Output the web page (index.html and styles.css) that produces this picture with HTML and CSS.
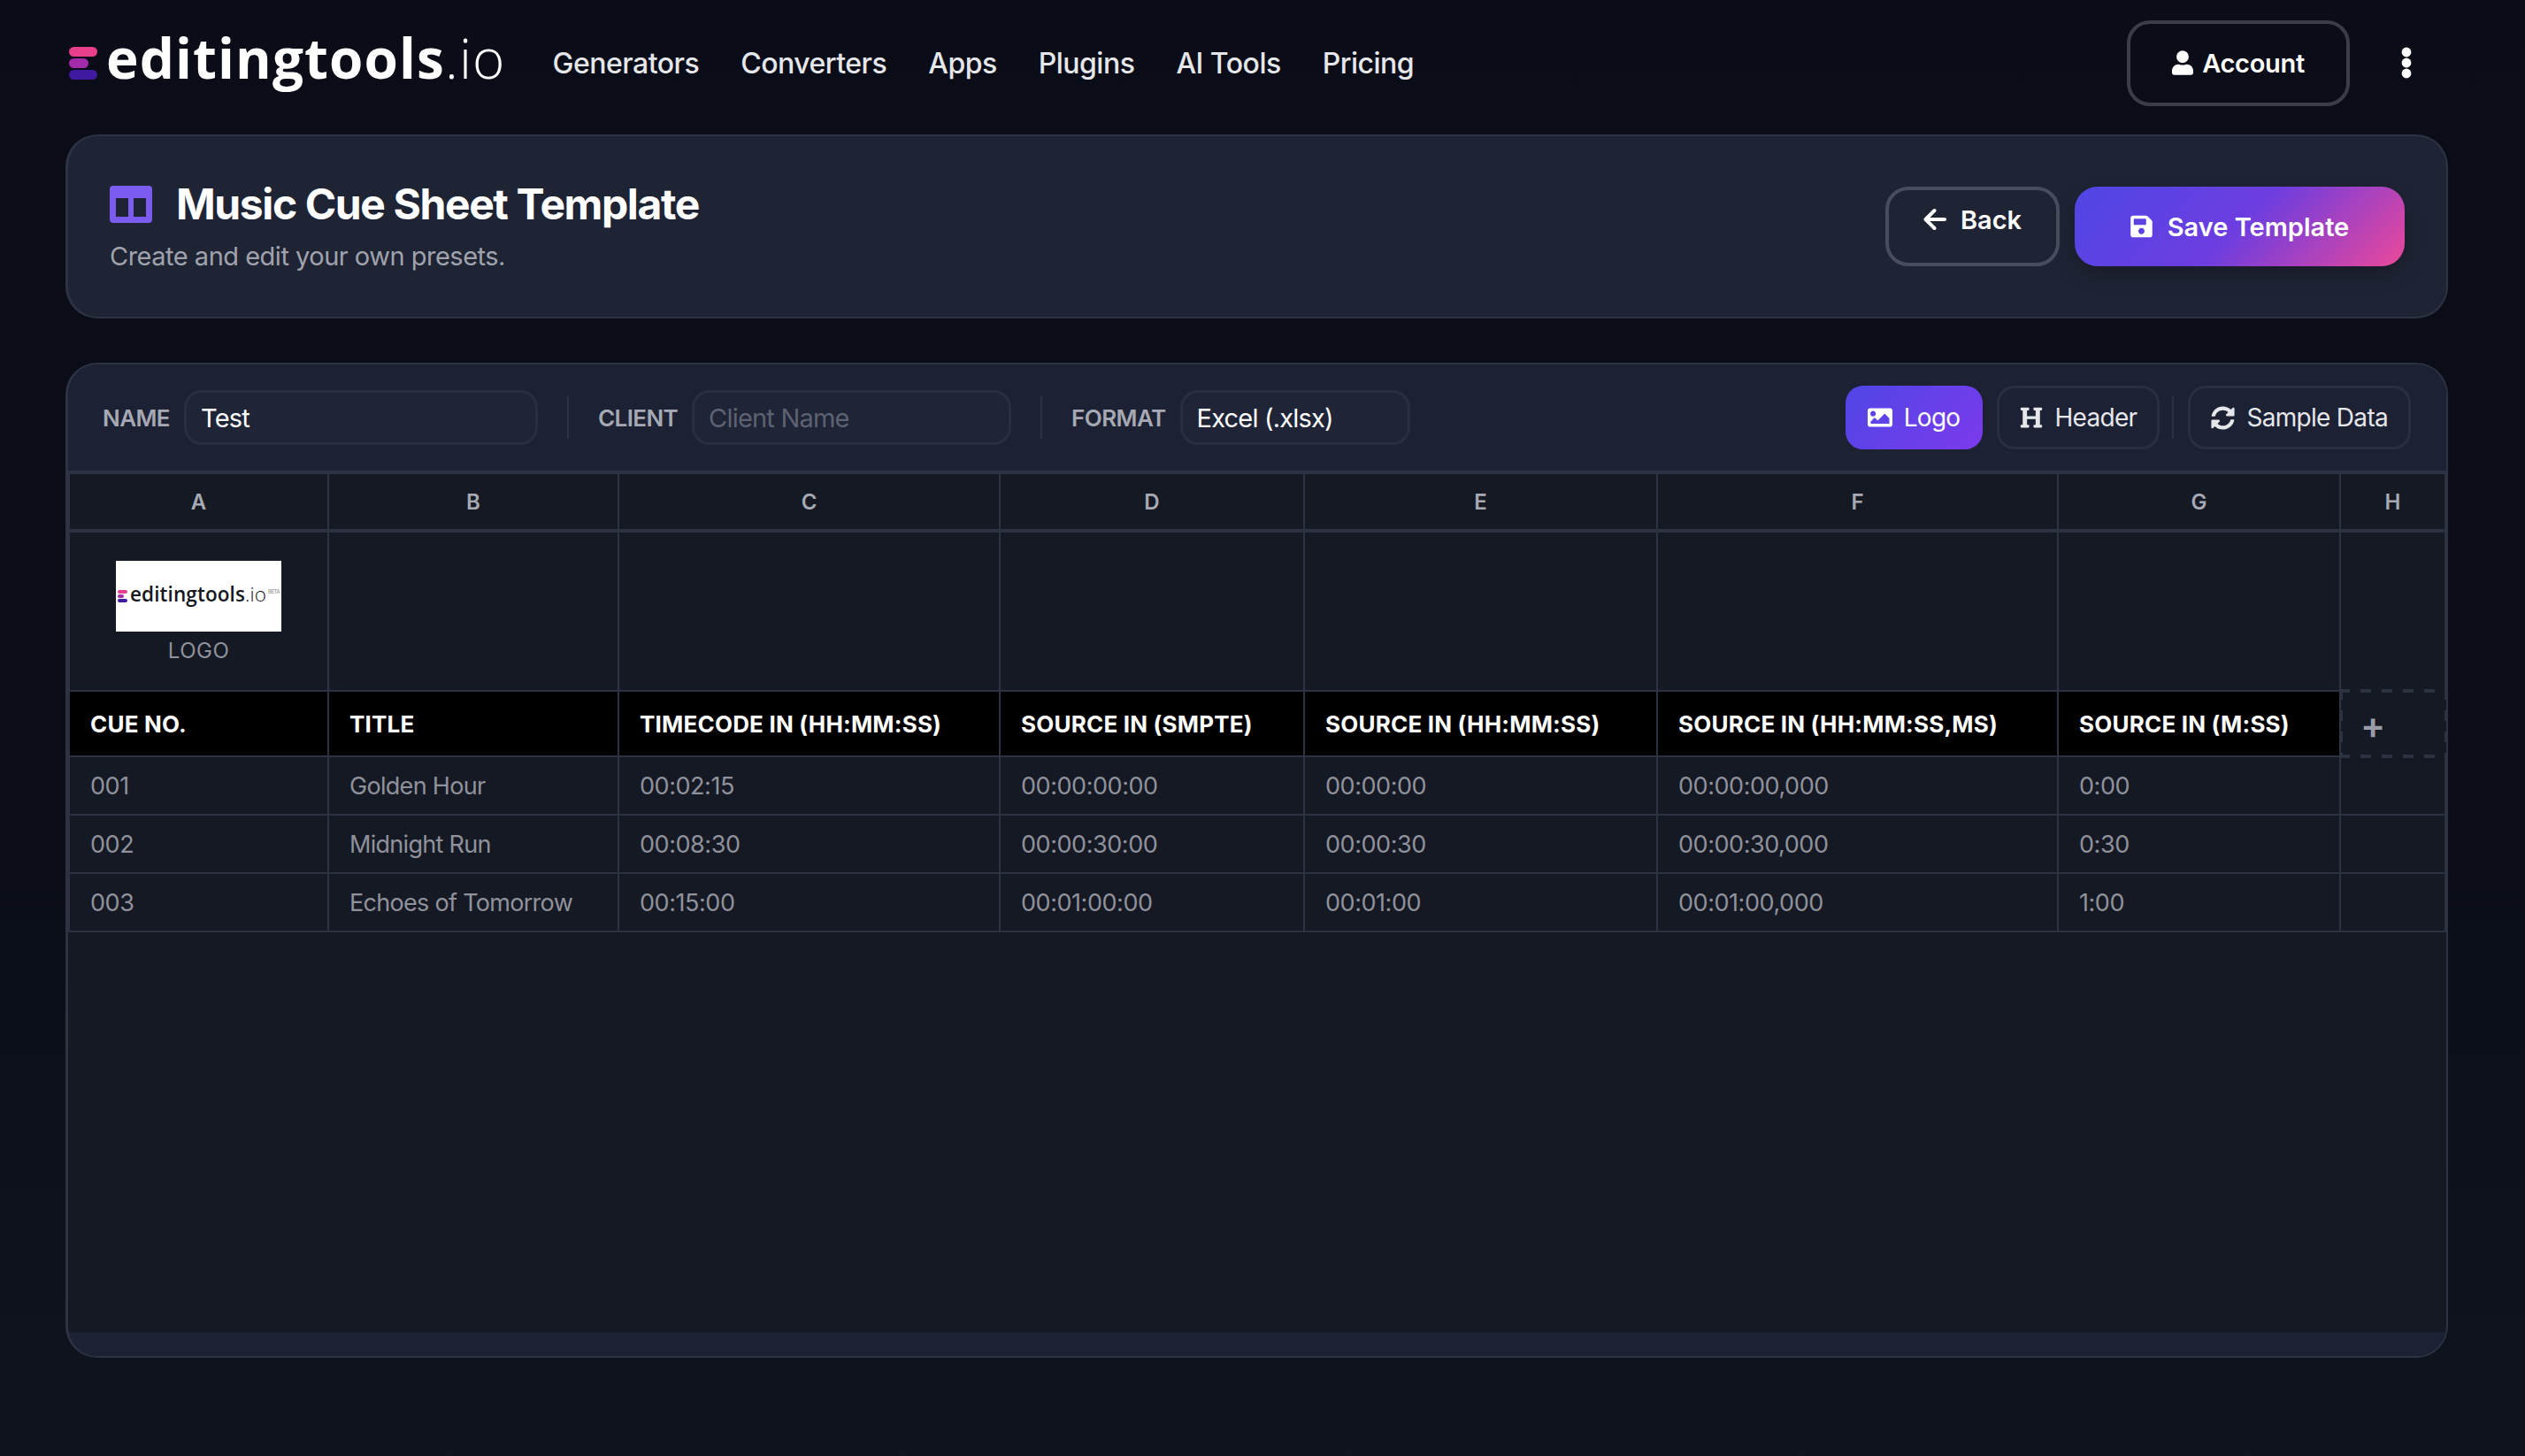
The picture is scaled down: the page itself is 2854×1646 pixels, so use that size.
FILE: index.html
```html
<!DOCTYPE html>
<html lang="en">
<head>
    <meta charset="UTF-8">
    <title>Music Cue Sheet Template</title>
    <link rel="stylesheet" href="styles.css">
</head>
<body>
    <nav class="navbar">
        <a class="brand">
            <span class="brand-mark"><i class="bar-pink"></i><i class="bar-purple"></i><i class="bar-indigo"></i></span>
            <span class="brand-name">editingtools<span class="brand-tld">.io</span></span>
        </a>
        <div class="nav-links">
            <a>Generators</a>
            <a>Converters</a>
            <a>Apps</a>
            <a>Plugins</a>
            <a>AI Tools</a>
            <a>Pricing</a>
        </div>
        <button class="account-btn">
            <svg class="icon-user" viewBox="0 0 448 512"><path d="M224 256c70.7 0 128-57.3 128-128S294.7 0 224 0 96 57.3 96 128s57.3 128 128 128zm89.6 32h-16.7c-22.2 10.2-46.9 16-72.9 16s-50.6-5.8-72.9-16h-16.7C60.2 288 0 348.2 0 422.4V464c0 26.5 21.5 48 48 48h352c26.5 0 48-21.5 48-48v-41.6c0-74.2-60.2-134.4-134.4-134.4z"/></svg>
            Account
        </button>
        <svg class="kebab" viewBox="0 0 12 36"><circle cx="6" cy="6" r="5.4"/><circle cx="6" cy="18" r="5.4"/><circle cx="6" cy="30" r="5.4"/></svg>
    </nav>

    <main class="page">
        <header class="page-header">
            <div class="page-heading">
                <h1 class="page-title">
                    <svg class="icon-columns" viewBox="0 0 48 42"><path fill-rule="evenodd" d="M4 0h40a4 4 0 0 1 4 4v34a4 4 0 0 1-4 4H4a4 4 0 0 1-4-4V4a4 4 0 0 1 4-4zM7 14v21h14V14zM27 14v21h14V14z"/></svg>
                    Music Cue Sheet Template
                </h1>
                <p class="page-subtitle">Create and edit your own presets.</p>
            </div>
            <div class="page-actions">
                <button class="back-btn">
                    <svg class="icon-arrow" viewBox="0 0 26 26"><path d="M24 13H3M12.5 3 2.5 13l10 10"/></svg>
                    Back
                </button>
                <button class="save-btn">
                    <svg class="icon-save" viewBox="0 0 448 512"><path d="M433.941 129.941l-83.882-83.882A48 48 0 0 0 316.118 32H48C21.49 32 0 53.49 0 80v352c0 26.51 21.49 48 48 48h352c26.51 0 48-21.49 48-48V163.882a48 48 0 0 0-14.059-33.941zM224 416c-35.346 0-64-28.654-64-64 0-35.346 28.654-64 64-64s64 28.654 64 64c0 35.346-28.654 64-64 64zm96-304.52V212c0 6.627-5.373 12-12 12H76c-6.627 0-12-5.373-12-12V108c0-6.627 5.373-12 12-12h228.52c3.183 0 6.235 1.264 8.485 3.515l3.48 3.48A11.996 11.996 0 0 1 320 111.48z"/></svg>
                    Save Template
                </button>
            </div>
        </header>

        <section class="sheet-card">
            <div class="toolbar">
                <label class="field-label">NAME</label>
                <input class="field field-name" type="text" value="Test">
                <span class="toolbar-divider"></span>
                <label class="field-label">CLIENT</label>
                <input class="field field-client" type="text" placeholder="Client Name">
                <span class="toolbar-divider"></span>
                <label class="field-label">FORMAT</label>
                <select class="field field-format"><option>Excel (.xlsx)</option></select>
                <div class="toolbar-actions">
                    <button class="tool-btn tool-active">
                        <svg class="icon-image" viewBox="0 0 512 512"><path d="M464 448H48c-26.51 0-48-21.49-48-48V112c0-26.51 21.49-48 48-48h416c26.51 0 48 21.49 48 48v288c0 26.51-21.49 48-48 48zM112 120c-30.928 0-56 25.072-56 56s25.072 56 56 56 56-25.072 56-56-25.072-56-56-56zM64 384h384V272l-87.515-87.515c-4.686-4.686-12.284-4.686-16.971 0L208 320l-55.515-55.515c-4.686-4.686-12.284-4.686-16.971 0L64 336v48z"/></svg>
                        Logo
                    </button>
                    <button class="tool-btn">
                        <svg class="icon-heading" viewBox="0 0 512 512"><path d="M448 96v320h32a16 16 0 0 1 16 16v32a16 16 0 0 1-16 16H320a16 16 0 0 1-16-16v-32a16 16 0 0 1 16-16h32V288H160v128h32a16 16 0 0 1 16 16v32a16 16 0 0 1-16 16H32a16 16 0 0 1-16-16v-32a16 16 0 0 1 16-16h32V96H32a16 16 0 0 1-16-16V48a16 16 0 0 1 16-16h160a16 16 0 0 1 16 16v32a16 16 0 0 1-16 16h-32v128h192V96h-32a16 16 0 0 1-16-16V48a16 16 0 0 1 16-16h160a16 16 0 0 1 16 16v32a16 16 0 0 1-16 16z"/></svg>
                        Header
                    </button>
                    <span class="toolbar-divider"></span>
                    <button class="tool-btn">
                        <svg class="icon-sync" viewBox="0 0 512 512"><path d="M370.72 133.28C339.458 104.008 298.888 87.962 255.848 88c-77.458.068-144.328 53.178-162.791 126.85-1.344 5.363-6.122 9.15-11.651 9.15H24.103c-7.498 0-13.194-6.807-11.807-14.176C33.933 94.924 134.813 8 256 8c66.448 0 126.791 26.136 171.315 68.685L463.03 40.97C478.149 25.851 504 36.559 504 57.941V192c0 13.255-10.745 24-24 24H345.941c-21.382 0-32.09-25.851-16.971-40.971l41.75-41.749zM32 296h134.059c21.382 0 32.09 25.851 16.971 40.971l-41.75 41.75c31.262 29.273 71.835 45.319 114.876 45.28 77.418-.07 144.315-53.144 162.787-126.849 1.344-5.363 6.122-9.15 11.651-9.15h57.304c7.498 0 13.194 6.807 11.807 14.176C478.067 417.076 377.187 504 256 504c-66.448 0-126.791-26.136-171.315-68.685L48.97 471.03C33.851 486.149 8 475.441 8 454.059V320c0-13.255 10.745-24 24-24z"/></svg>
                        Sample Data
                    </button>
                </div>
            </div>

            <div class="sheet-body">
                <table class="sheet">
                    <colgroup>
                        <col class="col-a"><col class="col-b"><col class="col-c"><col class="col-d"><col class="col-e"><col class="col-f"><col class="col-g"><col class="col-h">
                    </colgroup>
                    <thead>
                        <tr class="letters">
                            <th>A</th><th>B</th><th>C</th><th>D</th><th>E</th><th>F</th><th>G</th><th>H</th>
                        </tr>
                    </thead>
                    <tbody>
                        <tr class="logo-row">
                            <td>
                                <div class="logo-cell">
                                    <div class="logo-preview">
                                        <span class="mini-mark"><i class="bar-pink"></i><i class="bar-purple"></i><i class="bar-indigo"></i></span>
                                        <span class="mini-name">editingtools<span class="brand-tld">.io</span></span>
                                        <sup class="mini-beta">BETA</sup>
                                    </div>
                                    <span class="logo-caption">LOGO</span>
                                </div>
                            </td>
                            <td></td><td></td><td></td><td></td><td></td><td></td><td class="no-bottom"></td>
                        </tr>
                        <tr class="head-row">
                            <th>CUE NO.</th>
                            <th>TITLE</th>
                            <th>TIMECODE IN (HH:MM:SS)</th>
                            <th>SOURCE IN (SMPTE)</th>
                            <th>SOURCE IN (HH:MM:SS)</th>
                            <th>SOURCE IN (HH:MM:SS,MS)</th>
                            <th>SOURCE IN (M:SS)</th>
                            <td class="add-cell"><div class="add-col">+</div></td>
                        </tr>
                        <tr>
                            <td>001</td><td class="title-cell">Golden Hour</td><td>00:02:15</td><td>00:00:00:00</td><td>00:00:00</td><td>00:00:00,000</td><td>0:00</td><td></td>
                        </tr>
                        <tr>
                            <td>002</td><td class="title-cell">Midnight Run</td><td>00:08:30</td><td>00:00:30:00</td><td>00:00:30</td><td>00:00:30,000</td><td>0:30</td><td></td>
                        </tr>
                        <tr>
                            <td>003</td><td class="title-cell">Echoes of Tomorrow</td><td>00:15:00</td><td>00:01:00:00</td><td>00:01:00</td><td>00:01:00,000</td><td>1:00</td><td></td>
                        </tr>
                    </tbody>
                </table>
            </div>
            <div class="sheet-footer"></div>
        </section>
    </main>
</body>
</html>
```

FILE: styles.css
```css
* {
    margin: 0;
    padding: 0;
    box-sizing: border-box;
}
html, body {
    height: 100%;
}
body {
    font-family: 'Inter', 'Liberation Sans', sans-serif;
    background: linear-gradient(180deg, #0a0c18 0%, #0b0e19 60%, #10141e 100%);
    color: #fff;
    overflow: hidden;
}
button {
    font-family: inherit;
    color: inherit;
    cursor: pointer;
}

/* top bar */
.navbar {
    height: 152px;
    display: flex;
    align-items: center;
    padding: 0 128px 10px 78px;
}
.brand {
    display: flex;
    align-items: center;
    gap: 10px;
    margin-right: 53px;
}
.brand-mark {
    width: 32px;
    height: 37px;
    display: flex;
    flex-direction: column;
    justify-content: space-between;
}
.brand-mark i {
    display: block;
    height: 11px;
    border-radius: 6px;
}
.bar-pink { background: #e83e8c; }
.bar-purple { background: #a32aa8; width: 68%; }
.bar-indigo { background: #3f1aa0; }
.brand-name {
    font-family: 'Open Sans', 'Inter', sans-serif;
    font-size: 62px;
    font-weight: 700;
    letter-spacing: 1.1px;
    line-height: 1;
    color: #fff;
    margin-top: -12px;
}
.brand-tld {
    font-weight: 300;
}
.nav-links {
    display: flex;
    gap: 47px;
    font-size: 32px;
    font-weight: 500;
    letter-spacing: -0.5px;
    color: #e5e7eb;
}
.account-btn {
    margin-left: auto;
    width: 252px;
    height: 97px;
    background: transparent;
    border: 4px solid #3a3c48;
    border-radius: 26px;
    display: flex;
    align-items: center;
    justify-content: center;
    gap: 10px;
    font-size: 29px;
    font-weight: 600;
    letter-spacing: -0.3px;
}
.icon-user {
    width: 24px;
    height: 28px;
    fill: #fff;
}
.kebab {
    width: 12px;
    height: 36px;
    fill: #fff;
    margin-left: 58px;
}

/* page */
.page {
    padding: 0 87px 0 74px;
}
.page-header {
    height: 208px;
    background: #1f2435;
    border: 2px solid #2e3343;
    border-left-width: 3px;
    border-radius: 36px;
    display: flex;
    align-items: center;
    justify-content: space-between;
    padding: 0 47px;
    margin-bottom: 50px;
}
.page-heading {
    margin-top: -4px;
}
.page-title {
    display: flex;
    align-items: center;
    gap: 27px;
    font-size: 48px;
    font-weight: 700;
    letter-spacing: -1.4px;
    line-height: 58px;
}
.icon-columns {
    width: 48px;
    height: 42px;
    fill: #7c5cf0;
}
.page-subtitle {
    font-size: 29px;
    letter-spacing: -0.5px;
    color: #a0a3ad;
    margin-top: 12px;
}
.page-actions {
    display: flex;
    gap: 17px;
}
.back-btn {
    width: 197px;
    height: 90px;
    background: transparent;
    border: 4px solid #484c5c;
    border-radius: 26px;
    display: flex;
    justify-content: center;
    gap: 16px;
    padding-top: 16px;
    font-size: 29px;
    font-weight: 600;
    line-height: 36px;
}
.icon-arrow {
    width: 26px;
    height: 26px;
    margin-top: 4px;
    fill: none;
    stroke: #fff;
    stroke-width: 4;
    stroke-linecap: round;
    stroke-linejoin: round;
}
.save-btn {
    width: 373px;
    height: 90px;
    border: none;
    border-radius: 26px;
    background: linear-gradient(135deg, #4f46e5 0%, #6d3de0 50%, #ec4899 100%);
    box-shadow: 0 10px 24px rgba(0, 0, 0, 0.25);
    display: flex;
    align-items: center;
    justify-content: center;
    gap: 17px;
    font-size: 29px;
    font-weight: 600;
}
.icon-save {
    width: 25px;
    height: 28px;
    fill: #fff;
}

/* sheet card */
.sheet-card {
    height: 1125px;
    border: 2px solid #2e3343;
    border-left-width: 3px;
    border-radius: 36px;
    overflow: hidden;
    background: #151924;
    display: flex;
    flex-direction: column;
}
.toolbar {
    height: 124px;
    flex: none;
    background: #1c2133;
    border-bottom: 4px solid #2d3242;
    display: flex;
    align-items: center;
    gap: 16px;
    padding: 0 40px 0 39px;
}
.field-label {
    font-size: 26px;
    font-weight: 600;
    letter-spacing: -0.6px;
    color: #a6a9b3;
}
.field {
    height: 62px;
    background: #1f2436;
    border: 3px solid #2a2f40;
    border-radius: 20px;
    padding: 1px 16px 0;
    font-family: inherit;
    font-size: 29px;
    letter-spacing: -0.8px;
    color: #fff;
    outline: none;
    appearance: none;
}
.field::placeholder {
    color: #5d6272;
}
.field-name { width: 400px; }
.field-client { width: 361px; }
.field-format { width: 260px; }
.toolbar-divider {
    width: 2px;
    height: 48px;
    flex: none;
    background: #2d3242;
    margin: 0 17px;
}
.toolbar-actions {
    margin-left: auto;
    display: flex;
    align-items: center;
    gap: 16px;
}
.toolbar-actions .toolbar-divider {
    margin: 0 0 0 -2px;
}
.tool-btn {
    height: 72px;
    padding: 0 23px;
    background: #1c2133;
    border: 3px solid #2a2f40;
    border-radius: 20px;
    display: flex;
    align-items: center;
    gap: 13px;
    font-size: 28px;
    font-weight: 400;
    letter-spacing: -0.7px;
    color: #e5e7eb;
}
.tool-active {
    border: none;
    padding: 0 26px 0 25px;
    color: #fff;
    background: linear-gradient(135deg, #4f46e5, #7c3aed);
}
.tool-btn svg {
    fill: currentColor;
    flex: none;
}
.icon-image { width: 28px; height: 28px; }
.icon-heading { width: 26px; height: 26px; }
.icon-sync { width: 27px; height: 27px; }

/* table */
.sheet-body {
    flex: 1;
}
.sheet {
    width: 100%;
    table-layout: fixed;
    border-collapse: separate;
    border-spacing: 0;
}
.col-a { width: 295px; }
.col-b { width: 328px; }
.col-c { width: 431px; }
.col-d { width: 344px; }
.col-e { width: 399px; }
.col-f { width: 453px; }
.col-g { width: 319px; }
.col-h { width: 119px; }
.sheet th, .sheet td {
    border-right: 2px solid #2d3242;
    border-bottom: 2px solid #2d3242;
    padding: 0 23px;
    text-align: left;
}
.sheet td {
    height: 66px;
    font-size: 27px;
    letter-spacing: -0.45px;
    color: #8f929b;
}
.sheet .title-cell {
    letter-spacing: -0.7px;
}
.sheet tr > :first-child {
    border-left: 2px solid #2d3242;
}
.letters th {
    height: 66px;
    border-bottom-width: 4px;
    text-align: center;
    font-size: 24px;
    font-weight: 600;
    color: #a6a9b3;
}
.logo-row td {
    height: 180px;
    padding: 0;
}
.logo-row .no-bottom {
    border-bottom: none;
}
.logo-cell {
    display: flex;
    flex-direction: column;
    align-items: center;
    gap: 7px;
    height: 178px;
    padding-top: 32px;
}
.logo-preview {
    width: 187px;
    height: 80px;
    background: #fff;
    display: flex;
    align-items: center;
    padding-left: 2px;
    color: #16171d;
}
.mini-mark {
    width: 11px;
    height: 14px;
    flex: none;
    display: flex;
    flex-direction: column;
    justify-content: space-between;
    margin-right: 3px;
}
.mini-mark i {
    display: block;
    height: 4px;
    border-radius: 2px;
}
.mini-name {
    font-family: 'Open Sans', 'Inter', sans-serif;
    font-size: 22.5px;
    font-weight: 600;
    letter-spacing: 0.1px;
    margin-bottom: 5px;
}
.mini-beta {
    font-size: 6px;
    color: #888;
    margin: 0 0 12px 2px;
}
.logo-caption {
    font-size: 24px;
    line-height: 29px;
    letter-spacing: 0.5px;
    color: #8f929b;
}
.head-row th {
    height: 74px;
    background: #000;
    font-size: 26px;
    font-weight: 700;
    letter-spacing: 0.2px;
    color: #fff;
    white-space: nowrap;
}
.sheet .add-cell {
    position: relative;
    padding: 0;
    border: none;
    background: #151924;
}
.add-col {
    position: absolute;
    top: -3px;
    right: -2px;
    bottom: -1px;
    left: -2px;
    background:
        repeating-linear-gradient(90deg, #2d3242 0 12px, transparent 12px 24px) top / 100% 4px no-repeat,
        repeating-linear-gradient(90deg, #2d3242 0 12px, transparent 12px 24px) bottom / 100% 4px no-repeat,
        repeating-linear-gradient(180deg, #2d3242 0 12px, transparent 12px 24px) left / 4px 100% no-repeat,
        repeating-linear-gradient(180deg, #2d3242 0 12px, transparent 12px 24px) right / 4px 100% no-repeat;
    display: flex;
    align-items: center;
    padding: 2px 0 0 24px;
    font-size: 42px;
    font-weight: 600;
    color: #9a9da8;
}
.sheet-footer {
    height: 27px;
    flex: none;
    background: #1c2133;
}
```
